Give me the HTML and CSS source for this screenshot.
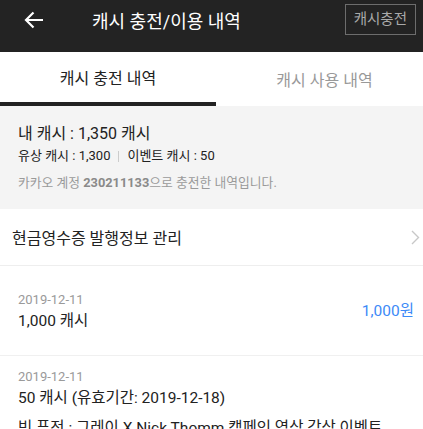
FILE: index.html
```html
<!DOCTYPE html>
<html lang="ko">
<head>
    <meta charset="UTF-8">
    <title>캐시 충전/이용 내역</title>
    <link rel="stylesheet" href="styles.css">
</head>
<body>
    <header class="top-bar">
        <a class="back" href="#">
            <svg width="22" height="20" viewBox="0 0 22 20">
                <path d="M20 10H3M10.5 2.5L3 10l7.5 7.5" fill="none" stroke="#fff" stroke-width="2.2"/>
            </svg>
        </a>
        <h1 class="title">캐시 충전/이용 내역</h1>
        <a class="charge-btn" href="#">캐시충전</a>
    </header>

    <nav class="tabs">
        <a class="tab active" href="#">캐시 충전 내역</a>
        <a class="tab" href="#">캐시 사용 내역</a>
    </nav>

    <section class="summary">
        <p class="total">내 캐시 : 1,350 캐시</p>
        <p class="detail">유상 캐시 : 1,300 <span class="sep"></span> 이벤트 캐시 : 50</p>
        <p class="account">카카오 계정 <strong>230211133</strong>으로 충전한 내역입니다.</p>
    </section>

    <a class="menu-row" href="#">
        <span>현금영수증 발행정보 관리</span>
        <svg width="9" height="15" viewBox="0 0 9 15">
            <path d="M1 1l6.5 6.5L1 14" fill="none" stroke="#c8c8c8" stroke-width="1.4"/>
        </svg>
    </a>

    <ul class="history">
        <li class="item">
            <div class="info">
                <p class="date">2019-12-11</p>
                <p class="amount">1,000 캐시</p>
            </div>
            <p class="price">1,000원</p>
        </li>
        <li class="item">
            <div class="info">
                <p class="date">2019-12-11</p>
                <p class="amount">50 캐시 (유효기간: 2019-12-18)</p>
                <p class="event">빅 퓨전 : 그레이 X Nick Thomm 캠페인 영상 감상 이벤트</p>
            </div>
        </li>
    </ul>
</body>
</html>
```

FILE: styles.css
```css
* {
    box-sizing: border-box;
}

body {
    margin: 0;
    font-family: Roboto, "Noto Sans CJK KR", sans-serif;
    color: #222;
    background: #fff;
    overflow: hidden;
}

p {
    margin: 0;
}

a {
    text-decoration: none;
    color: inherit;
}

.top-bar {
    display: flex;
    align-items: center;
    height: 52px;
    padding: 0 7px 13px 23px;
    background: #232323;
}

.back {
    display: flex;
    width: 22px;
}

.title {
    flex: 1;
    margin: 0 0 0 47px;
    font-size: 18px;
    font-weight: 400;
    color: #fff;
}

.charge-btn {
    padding: 4px 8px;
    border: 1px solid #6d6d6d;
    font-size: 14.5px;
    color: #a9a9a9;
    line-height: 21px;
}

.tabs {
    display: flex;
    height: 54px;
}

.tab {
    display: flex;
    align-items: center;
    justify-content: center;
    font-size: 16px;
    color: #999;
}

.tab:first-child {
    width: 216px;
}

.tab:last-child {
    flex: 1;
    padding-left: 10px;
}

.tab.active {
    color: #222;
    border-bottom: 4px solid #222;
}

.summary {
    height: 103px;
    padding: 18px 18px 0;
    background: #f4f4f4;
}

.total {
    font-size: 16px;
    line-height: 20px;
}

.detail {
    display: flex;
    align-items: center;
    margin-top: 4px;
    font-size: 13px;
    line-height: 16px;
}

.sep {
    display: inline-block;
    width: 1px;
    height: 11px;
    margin: 0 8px;
    background: #ccc;
}

.account {
    margin-top: 11px;
    font-size: 12.8px;
    line-height: 16px;
    color: #9a9a9a;
}

.account strong {
    color: #8a8a8a;
}

.menu-row {
    display: flex;
    align-items: center;
    justify-content: space-between;
    height: 57px;
    padding: 0 3px 0 12px;
    border-bottom: 1px solid #eee;
    font-size: 16px;
}

.history {
    list-style: none;
    margin: 0;
    padding: 0;
}

.item {
    display: flex;
    align-items: center;
    justify-content: space-between;
    padding: 0 9px 0 18px;
    height: 90px;
    border-bottom: 1px solid #f0f0f0;
}

.item:last-child {
    align-items: flex-start;
    padding-top: 12px;
    border-bottom: 0;
}

.date {
    font-size: 13px;
    line-height: 17px;
    color: #9a9a9a;
}

.amount {
    margin-top: 3px;
    font-size: 15.5px;
    line-height: 20px;
}

.event {
    margin-top: 10px;
    font-size: 15.5px;
    line-height: 20px;
}

.price {
    font-size: 15.5px;
    color: #3d8af7;
    margin-bottom: 4px;
}
```
